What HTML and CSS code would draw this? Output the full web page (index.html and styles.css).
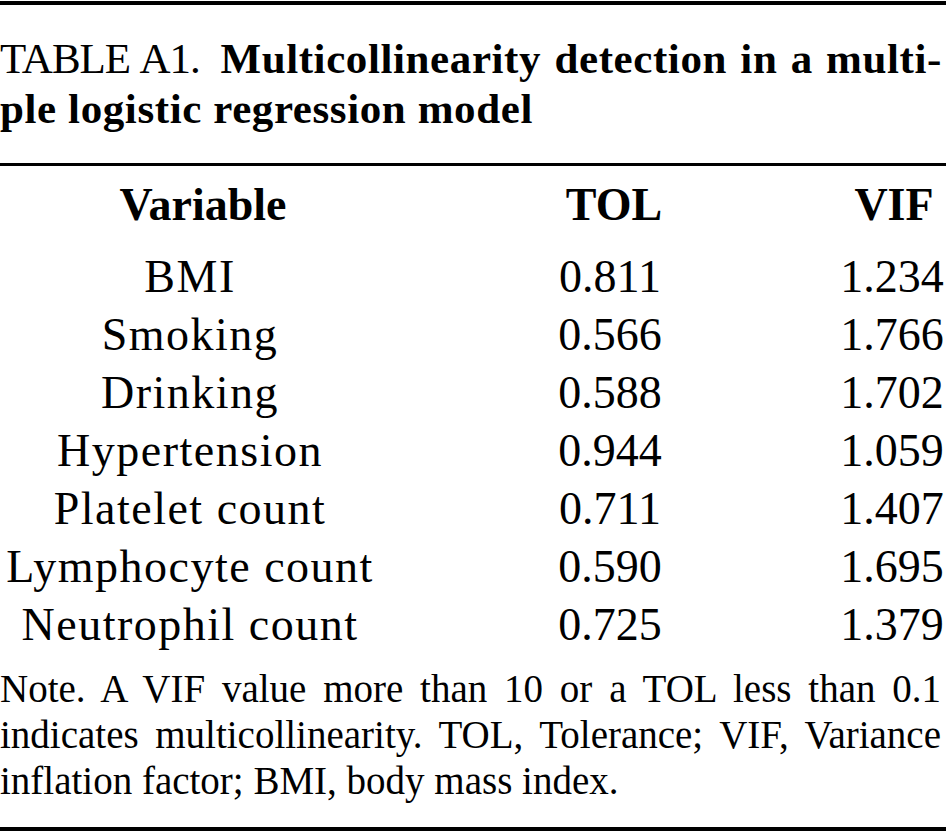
FILE: index.html
```html
<!DOCTYPE html>
<html lang="en">
<head>
<meta charset="utf-8">
<title>Table A1</title>
<link rel="stylesheet" href="styles.css">
</head>
<body>
<div class="page">
  <div class="rule rule-thick"></div>
  <div class="caption">
    <div class="caption-line caption-line-first"><span class="caption-label">TABLE A1.</span> <span class="caption-title">Multicollinearity detection in a multi-</span></div>
    <div class="caption-line"><span class="caption-title">ple logistic regression model</span></div>
  </div>
  <div class="rule rule-mid"></div>
  <div class="table">
    <div class="row row-head">
      <div class="cell cell-head-var">Variable</div>
      <div class="cell cell-head-tol">TOL</div>
      <div class="cell cell-head-vif">VIF</div>
    </div>
    <div class="row"><div class="cell cell-name">BMI</div><div class="cell">0.811</div><div class="cell">1.234</div></div>
    <div class="row"><div class="cell cell-name">Smoking</div><div class="cell">0.566</div><div class="cell">1.766</div></div>
    <div class="row"><div class="cell cell-name">Drinking</div><div class="cell">0.588</div><div class="cell">1.702</div></div>
    <div class="row"><div class="cell cell-name">Hypertension</div><div class="cell">0.944</div><div class="cell">1.059</div></div>
    <div class="row"><div class="cell cell-name">Platelet count</div><div class="cell">0.711</div><div class="cell">1.407</div></div>
    <div class="row"><div class="cell cell-name">Lymphocyte count</div><div class="cell">0.590</div><div class="cell">1.695</div></div>
    <div class="row"><div class="cell cell-name">Neutrophil count</div><div class="cell">0.725</div><div class="cell">1.379</div></div>
  </div>
  <p class="note">Note. A VIF value more than 10 or a TOL less than 0.1 indicates multicollinearity. TOL, Tolerance; VIF, Variance inflation factor; BMI, body mass index.</p>
  <div class="rule rule-thick rule-bottom"></div>
</div>
</body>
</html>
```

FILE: styles.css
```css
html, body {
  margin: 0;
  padding: 0;
  background: #ffffff;
  color: #000000;
}

body {
  font-family: "Liberation Serif", "Times New Roman", serif;
}

.page {
  width: 946px;
  padding-top: 1px;
}

.rule {
  background: #000000;
}

.rule-thick {
  height: 4px;
}

.rule-mid {
  height: 3px;
  margin-top: 29.5px;
}

.rule-bottom {
  margin-top: 23px;
}

.caption {
  margin-top: 28.5px;
  padding-right: 4px;
  font-size: 43px;
  line-height: 50px;
}

.caption-line-first {
  text-align: justify;
  text-align-last: justify;
}

.caption-label {
  letter-spacing: -1px;
  margin-right: 8px;
}

.caption-title {
  font-weight: bold;
  letter-spacing: 0.6px;
}

.table {
  margin-top: 9.5px;
  display: flex;
  flex-direction: column;
  font-size: 46px;
  line-height: 58px;
}

.row {
  display: grid;
  grid-template-columns: 380px 460px 104px;
}

.row-head {
  font-weight: bold;
  padding-bottom: 14px;
}

.cell {
  text-align: center;
  white-space: nowrap;
}

.cell-name {
  letter-spacing: 1.5px;
}

.cell-head-var {
  padding-left: 26px;
}

.cell-head-tol {
  padding-left: 8px;
}

.cell-head-vif {
  padding-left: 4px;
}

.note {
  margin: 12.5px 0 0 0;
  padding-right: 5px;
  font-size: 39px;
  line-height: 46px;
  text-align: justify;
}
```
